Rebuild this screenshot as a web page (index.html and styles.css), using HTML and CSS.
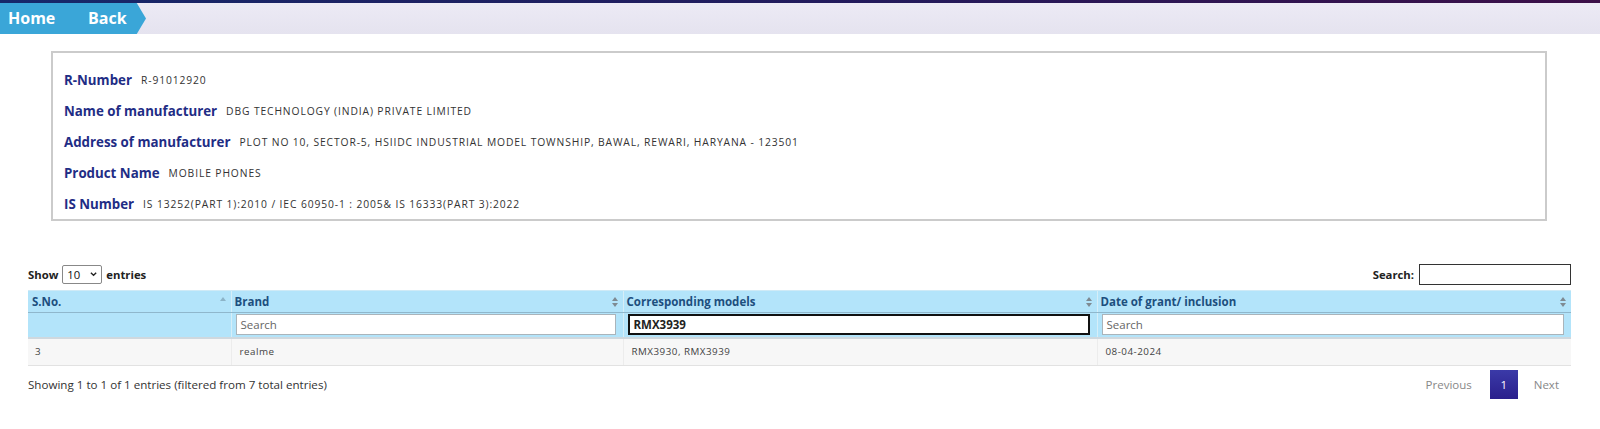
FILE: index.html
```html
<!DOCTYPE html>
<html>
<head>
<meta charset="utf-8">
<link rel="stylesheet" href="styles.css">
</head>
<body>
<div class="topline"></div>
<div class="crumbbar">
  <a class="crumb crumb-home">Home</a>
  <a class="crumb crumb-back">Back</a>
</div>

<div class="info">
  <div class="info-row"><span class="lbl">R-Number</span><span class="val">R-91012920</span></div>
  <div class="info-row"><span class="lbl">Name of manufacturer</span><span class="val">DBG TECHNOLOGY (INDIA) PRIVATE LIMITED</span></div>
  <div class="info-row"><span class="lbl">Address of manufacturer</span><span class="val">PLOT NO 10, SECTOR-5, HSIIDC INDUSTRIAL MODEL TOWNSHIP, BAWAL, REWARI, HARYANA - 123501</span></div>
  <div class="info-row"><span class="lbl">Product Name</span><span class="val">MOBILE PHONES</span></div>
  <div class="info-row"><span class="lbl">IS Number</span><span class="val">IS 13252(PART 1):2010 / IEC 60950-1 : 2005&amp; IS 16333(PART 3):2022</span></div>
</div>

<div class="dt">
  <div class="dt-top">
    <div class="length">Show <span class="sel">10 <svg width="8" height="6" viewBox="0 0 8 6"><path d="M1 1.5 L4 4.5 L7 1.5" fill="none" stroke="#222" stroke-width="1.5"/></svg></span> entries</div>
    <div class="search">Search: <span class="search-box"></span></div>
  </div>
  <table class="grid">
    <colgroup>
      <col class="c1"><col class="c2"><col class="c3"><col class="c4">
    </colgroup>
    <thead>
      <tr class="head">
        <th><span>S.No.</span><i class="sort asc"></i></th>
        <th><span>Brand</span><i class="sort"></i></th>
        <th><span>Corresponding models</span><i class="sort"></i></th>
        <th><span>Date of grant/ inclusion</span><i class="sort"></i></th>
      </tr>
      <tr class="filter">
        <td></td>
        <td><span class="fin ph">Search</span></td>
        <td><span class="fin focus">RMX3939</span></td>
        <td><span class="fin ph">Search</span></td>
      </tr>
    </thead>
    <tbody>
      <tr class="row">
        <td>3</td>
        <td>realme</td>
        <td>RMX3930, RMX3939</td>
        <td>08-04-2024</td>
      </tr>
    </tbody>
  </table>
  <div class="dt-bottom">
    <div class="infotext">Showing 1 to 1 of 1 entries (filtered from 7 total entries)</div>
    <div class="pager">
      <span class="pg dis">Previous</span>
      <span class="pg cur">1</span>
      <span class="pg dis">Next</span>
    </div>
  </div>
</div>
</body>
</html>
```

FILE: styles.css
```css
* { box-sizing: border-box; }
body {
  margin: 0;
  font-family: "Open Sans", "Liberation Sans", sans-serif;
  color: #333;
  background: #fff;
}
.topline {
  height: 3px;
  background: linear-gradient(90deg, #16286a, #231a5c 55%, #3c0f48);
}
.crumbbar {
  height: 31px;
  background: linear-gradient(180deg, #eceaf5, #e5e3ef);
  display: flex;
  align-items: stretch;
}
.crumb {
  color: #fff;
  font-weight: 700;
  font-size: 16px;
  line-height: 30px;
  background: #3aa6d8;
  text-decoration: none;
}
.crumb-home {
  width: 80px;
  padding-left: 8px;
}
.crumb-back {
  width: 66px;
  padding-left: 8px;
  clip-path: polygon(0 0, 86% 0, 100% 50%, 86% 100%, 0 100%);
}
.info {
  margin: 17px 0 0 51px;
  width: 1496px;
  border: 2px solid #cbcbcb;
  padding: 11px 11px 0;
}
.info-row {
  height: 31px;
  display: flex;
  align-items: center;
  gap: 9px;
}
.lbl {
  font-weight: 700;
  font-size: 13.3px;
  color: #1f2d85;
}
.val {
  font-size: 10.3px;
  letter-spacing: 0.88px;
  color: #333;
}
.dt {
  margin: 42px 0 0 28px;
  width: 1543px;
}
.dt-top {
  display: flex;
  justify-content: space-between;
  align-items: center;
  height: 22px;
  font-size: 11.3px;
  font-weight: 700;
  color: #222;
}
.length { display: flex; align-items: center; gap: 4px; }
.sel {
  display: inline-flex;
  align-items: center;
  gap: 10px;
  height: 19px;
  width: 40px;
  padding: 0 4px;
  border: 1px solid #888;
  border-radius: 2px;
  font-weight: 400;
  color: #111;
}
.search { display: flex; align-items: center; gap: 5px; }
.search-box {
  width: 152px;
  height: 21px;
  border: 1px solid #333;
  background: #fff;
}
.grid {
  margin-top: 5px;
  width: 1543px;
  border-collapse: collapse;
  table-layout: fixed;
}
.c1 { width: 203px; }
.c2 { width: 392px; }
.c3 { width: 474px; }
.c4 { width: 474px; }
.head th {
  background: #b3e4fa;
  height: 22px;
  text-align: left;
  font-size: 11.5px;
  font-weight: 700;
  color: #1d4f7e;
  padding: 0 14px 0 3px;
  border-left: 1px solid #d6eef8;
  border-bottom: 1px solid #8fb7cc;
  border-top: 1px solid #cfeaf6;
  position: relative;
}
.head th:first-child { border-left: none; padding-left: 4px; }
.sort {
  position: absolute;
  right: 5px;
  top: 6px;
  width: 6px;
  height: 10px;
}
.sort::before, .sort::after {
  content: "";
  position: absolute;
  left: 0;
  border-left: 3px solid transparent;
  border-right: 3px solid transparent;
}
.sort::before { top: 0; border-bottom: 4px solid #7e8a92; }
.sort::after { bottom: 0; border-top: 4px solid #7e8a92; }
.sort.asc::before { border-bottom-color: #8cb4c8; }
.sort.asc::after { display: none; }
.filter td {
  background: #b3e4fa;
  height: 25px;
  padding: 0 0 0 4px;
  border-left: 1px solid #d6eef8;
  border-bottom: 2px solid #cfd8de;
}
.filter td:first-child { border-left: none; }
.fin {
  display: flex;
  align-items: center;
  width: calc(100% - 7px);
  height: 21px;
  background: #fff;
  border: 1px solid #aab4ba;
  padding: 0 4px;
  font-size: 11.5px;
}
.fin.ph { color: #666; }
.fin.focus {
  border: 2px solid #111;
  color: #222;
  font-weight: 700;
}
.row td {
  background: #f7f7f7;
  height: 28px;
  font-size: 9.8px;
  letter-spacing: 0.5px;
  color: #444;
  padding: 0 8px;
  border-left: 1px solid #ececec;
  border-bottom: 1px solid #e2e2e2;
}
.row td:first-child { border-left: none; padding-left: 7px; }
.dt-bottom {
  display: flex;
  justify-content: space-between;
  align-items: center;
  margin-top: 4px;
}
.infotext {
  font-size: 11.6px;
  color: #333;
}
.pager {
  display: flex;
  align-items: center;
  margin-right: 0;
}
.pg {
  font-size: 11.5px;
  color: #888;
  padding: 0 12px;
  line-height: 29px;
}
.pg.cur {
  background: linear-gradient(180deg, #3b3aa8, #2a1f8c);
  color: #fff;
  width: 28px;
  padding: 0;
  text-align: center;
  margin: 0 4px 0 6px;
}
```
